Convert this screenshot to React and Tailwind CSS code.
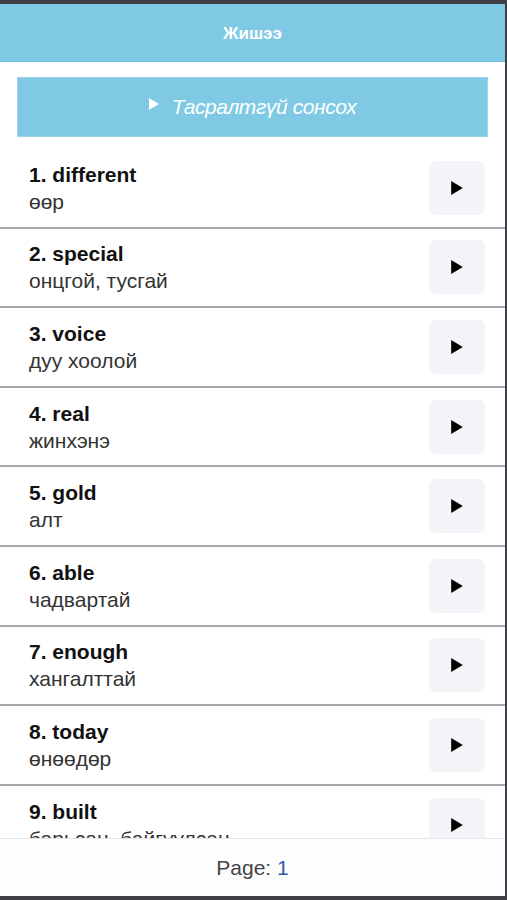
import React from 'react';

const words = [
  { en: 'different', mn: 'өөр' },
  { en: 'special', mn: 'онцгой, тусгай' },
  { en: 'voice', mn: 'дуу хоолой' },
  { en: 'real', mn: 'жинхэнэ' },
  { en: 'gold', mn: 'алт' },
  { en: 'able', mn: 'чадвартай' },
  { en: 'enough', mn: 'хангалттай' },
  { en: 'today', mn: 'өнөөдөр' },
  { en: 'built', mn: 'барьсан, байгуулсан' },
];

const PlayIcon = ({ className }) => (
  <svg className={className} viewBox="0 0 10 12" fill="currentColor">
    <path d="M0 0L10 6L0 12Z" />
  </svg>
);

const App = () => {
  return (
    <div
      className="h-[900px] flex flex-col bg-[#3d3f44] overflow-hidden"
      style={{ fontFamily: '"Liberation Sans", Arial, sans-serif' }}
    >
      <div className="h-[4px] shrink-0" />
      <div className="flex-1 flex flex-col bg-white mr-[2px] min-h-0">
        {/* Шапка */}
        <div className="h-[58px] shrink-0 bg-[#80c9e5] border-b border-[#74bcd8] flex items-center justify-center pt-[3px]">
          <span className="text-white font-bold text-[17px]">Жишээ</span>
        </div>

        {/* Тасралтгүй сонсох товч */}
        <div className="px-[17px] pt-[15px] pb-[12px] shrink-0">
          <button className="w-full h-[60px] bg-[#80c9e5] border border-[#9ad3ea] flex items-center justify-center gap-[13px] text-white">
            <PlayIcon className="w-[10px] h-[12px] -mt-[6px]" />
            <span className="italic text-[21px] tracking-[-0.4px]">Тасралтгүй сонсох</span>
          </button>
        </div>

        {/* Жагсаалт */}
        <div className="flex-1 min-h-0 overflow-hidden">
          {words.map((w, i) => (
            <div
              key={w.en}
              className="h-[79.6px] border-b-2 border-[#a8a8a8] flex items-center pl-[29px] pr-[20px]"
            >
              <div className="flex-1 min-w-0">
                <div className="text-[21px] font-bold text-[#111] leading-[27px]">
                  {i + 1}. {w.en}
                </div>
                <div className="text-[21px] text-[#333] leading-[27px]">{w.mn}</div>
              </div>
              <button className="w-[56px] h-[54px] rounded-[7px] bg-[#f3f4f8] flex items-center justify-center text-black">
                <PlayIcon className="w-[12px] h-[14px]" />
              </button>
            </div>
          ))}
        </div>

        {/* Хуудас */}
        <div className="h-[58px] shrink-0 bg-[#fdfdfd] border-t border-[#e6e6e6] flex items-center justify-center text-[21px] text-[#444]">
          Page:&nbsp;<span className="text-[#2b5ca8]">1</span>
        </div>
      </div>
      <div className="h-[4px] shrink-0" />
    </div>
  );
};

export default App;
